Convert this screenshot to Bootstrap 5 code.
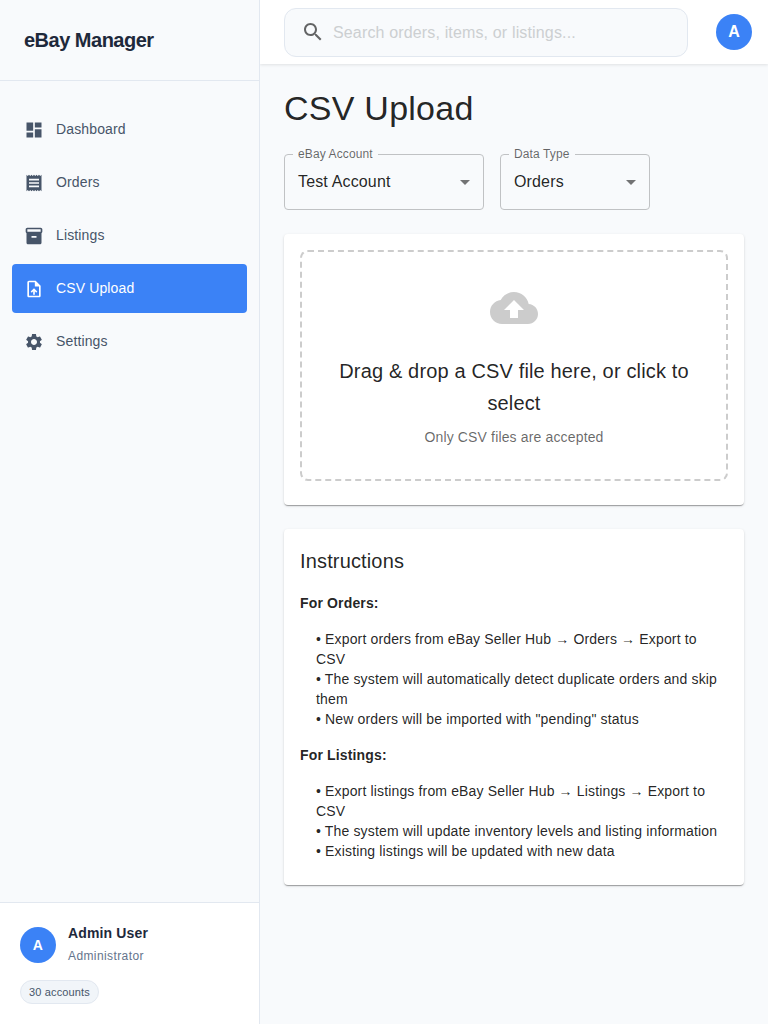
<!DOCTYPE html>
<html lang="en">
<head>
<meta charset="utf-8">
<meta name="viewport" content="width=device-width, initial-scale=1">
<title>eBay Manager</title>
<link href="https://cdn.jsdelivr.net/npm/bootstrap@5.3.0/dist/css/bootstrap.min.css" rel="stylesheet">
<style>
  body { font-family: "Liberation Sans", Arial, sans-serif; background: #f8fafc; color: rgba(0,0,0,.87); letter-spacing: .00938em; }
  .sidebar { width: 260px; border-right: 1px solid #e2e8f0; background: #f8fafc; z-index: 2; }
  .brand { height: 81px; border-bottom: 1px solid #e2e8f0; font-size: 20px; font-weight: 700; letter-spacing: -.025em; color: #1e293b; }
  .side-links { padding: 24px 12px; gap: 4px; }
  .side-links .nav-link { height: 49px; padding: 0 12px; gap: 12px; font-size: 14px; line-height: 21px; letter-spacing: .00938em; color: #475569; border-radius: 4px; }
  .side-links .nav-link span { padding-bottom: 1px; }
  .side-links .nav-link.active { background: #3b82f6; color: #fff; }
  svg { fill: currentColor; flex-shrink: 0; display: block; }
  .side-links svg { width: 20px; height: 20px; margin-top: 1px; }
  .user-panel { height: 122px; padding: 20px; background: #fff; border-top: 1px solid #e2e8f0; }
  .avatar { width: 36px; height: 36px; background: #3b82f6; color: #fff; font-weight: 600; letter-spacing: 0; }
  .user-name { font-size: 14px; line-height: 20px; letter-spacing: .01071em; color: #1e293b; font-weight: 600; }
  .user-role { font-size: 12px; line-height: 24px; letter-spacing: .03333em; color: #64748b; padding-top: 1px; height: 24px; }
  .account-chip { height: 24px; margin-top: 13px; padding: 0 8px; font-size: 11px; border: 1px solid #e2e8f0; background: #f1f5f9; color: #475569; letter-spacing: .15px; }
  .topbar { height: 64px; background: #fff; padding: 0 16px 0 24px; box-shadow: 0 1px 3px rgba(0,0,0,.1); }
  .search-box { width: 404px; height: 49px; margin-top: 1px; padding: 0 16px; gap: 8px; border: 1px solid #e2e8f0; border-radius: 12px; background: #f8fafc; }
  .search-box svg { color: rgba(0,0,0,.6); margin-top: -1px; }
  .search-box input { font: inherit; letter-spacing: inherit; background: none; outline: 0; padding: 0; }
  .search-box input::placeholder { color: #cccfd1; opacity: 1; }
  .page { padding: 23px 24px 24px; }
  .page-title { font-size: 34px; line-height: 42px; letter-spacing: .00735em; font-weight: 400; margin-bottom: 25px; }
  .select-box { height: 56px; padding: 0 6px 0 13px; border: 1px solid #c0c2c4; border-radius: 4px; }
  .select-box .float-label { left: 8px; top: -11px; padding: 0 5px; background: #f8fafc; font-size: 12px; line-height: 20px; letter-spacing: .00938em; color: rgba(0,0,0,.6); }
  .select-box svg { color: rgba(0,0,0,.54); }
  .panel { background: #fff; border-radius: 4px; padding: 16px 16px 24px; box-shadow: 0 2px 1px -1px rgba(0,0,0,.2), 0 1px 1px rgba(0,0,0,.14), 0 1px 3px rgba(0,0,0,.12); }
  .dropzone { border: 2px dashed #ccc; border-radius: 8px; padding: 32px; height: 231px; }
  .dropzone svg { color: #ccc; margin-bottom: 23px; }
  .title-6 { font-size: 20px; line-height: 32px; letter-spacing: .0075em; font-weight: 400; margin: 0; }
  .text-2 { font-size: 14px; line-height: 20px; letter-spacing: .01071em; margin: 0; }
  .hint { color: rgba(0,0,0,.6); }
  .select-wide { width: 200px; }
  .select-narrow { width: 150px; }
</style>
</head>
<body>
<div class="d-flex vh-100">
  <aside class="sidebar position-relative d-flex flex-column flex-shrink-0">
    <div class="brand d-flex align-items-center px-4">eBay Manager</div>
    <nav class="side-links nav flex-column flex-grow-1">
      <a class="nav-link d-flex align-items-center" href="#">
        <svg viewBox="0 0 24 24"><path d="M3 13h8V3H3v10zm0 8h8v-6H3v6zm10 0h8V11h-8v10zm0-18v6h8V3h-8z"/></svg><span>Dashboard</span></a>
      <a class="nav-link d-flex align-items-center" href="#">
        <svg viewBox="0 0 24 24"><path d="M19.5 3.500 18 2l-1.500 1.500L15 2l-1.500 1.500L12 2l-1.500 1.500L9 2 7.500 3.500 6 2 4.500 3.500 3 2v20l1.500-1.500L6 22l1.500-1.500L9 22l1.500-1.500L12 22l1.500-1.500L15 22l1.500-1.500L18 22l1.500-1.500L21 22V2l-1.500 1.500zM18 17H6v-2h12v2zm0-4H6v-2h12v2zm0-4H6V7h12v2z"/></svg><span>Orders</span></a>
      <a class="nav-link d-flex align-items-center" href="#">
        <svg viewBox="0 0 24 24"><path d="M20 2H4c-1 0-2 .9-2 2v3.010c0 .72.43 1.340 1 1.690V20c0 1.100 1.100 2 2 2h14c.9 0 2-.9 2-2V8.700c.57-.35 1-.97 1-1.690V4c0-1.100-1-2-2-2zm-5 12H9v-2h6v2zm5-7H4V4h16v3z"/></svg><span>Listings</span></a>
      <a class="nav-link active d-flex align-items-center" href="#">
        <svg viewBox="0 0 24 24"><path d="M14 2H6c-1.100 0-1.990.9-1.990 2L4 20c0 1.100.89 2 1.990 2H18c1.100 0 2-.9 2-2V8l-6-6zm4 18H6V4h7v5h5v11zM8 15.010l1.410 1.410L11 14.840V19h2v-4.160l1.590 1.590L16 15.010 12.010 11 8 15.010z"/></svg><span>CSV Upload</span></a>
      <a class="nav-link d-flex align-items-center" href="#">
        <svg viewBox="0 0 24 24"><path d="M19.140 12.940c.04-.3.060-.61.060-.94 0-.32-.02-.64-.07-.94l2.030-1.580c.18-.14.230-.41.120-.61l-1.920-3.320c-.12-.22-.37-.29-.59-.22l-2.390.96c-.5-.38-1.030-.7-1.620-.94l-.36-2.540c-.04-.24-.24-.41-.48-.41h-3.840c-.24 0-.43.17-.47.41l-.36 2.540c-.59.24-1.130.57-1.620.94l-2.390-.96c-.22-.08-.47 0-.59.22L2.740 8.870c-.12.21-.08.47.12.61l2.030 1.580c-.05.3-.09.630-.09.94s.02.640.07.940l-2.030 1.580c-.18.140-.23.410-.12.610l1.920 3.320c.12.220.370.290.590.220l2.390-.96c.5.380 1.030.700 1.620.940l.36 2.540c.05.240.240.410.480.410h3.840c.24 0 .440-.17.470-.41l.36-2.540c.59-.24 1.130-.56 1.620-.94l2.390.96c.22.080.470 0 .590-.22l1.920-3.320c.12-.22.070-.47-.12-.61l-2.010-1.580zM12 15.600c-1.980 0-3.600-1.620-3.600-3.600s1.620-3.600 3.600-3.600 3.600 1.620 3.600 3.600-1.620 3.600-3.600 3.600z"/></svg><span>Settings</span></a>
    </nav>
    <div class="user-panel">
      <div class="d-flex align-items-center">
        <div class="avatar rounded-circle d-flex align-items-center justify-content-center text-2 fw-bold">A</div>
        <div class="ms-2 ps-1">
          <div class="user-name">Admin User</div>
          <div class="user-role">Administrator</div>
        </div>
      </div>
      <span class="account-chip rounded-pill d-inline-flex align-items-center">30 accounts</span>
    </div>
  </aside>

  <div class="flex-grow-1 d-flex flex-column">
    <header class="topbar d-flex align-items-center justify-content-between">
      <label class="search-box d-flex align-items-center">
        <svg width="24" height="24" viewBox="0 0 24 24"><path d="M15.500 14h-.79l-.28-.27C15.410 12.590 16 11.110 16 9.500 16 5.910 13.090 3 9.500 3S3 5.910 3 9.500 5.910 16 9.500 16c1.610 0 3.090-.59 4.230-1.570l.27.280v.79l5 4.990L20.490 19l-4.990-5zm-6 0C7.010 14 5 11.990 5 9.500S7.010 5 9.500 5 14 7.010 14 9.500 11.990 14 9.500 14z"/></svg>
        <input class="border-0 flex-grow-1" type="text" placeholder="Search orders, items, or listings...">
      </label>
      <div class="avatar rounded-circle d-flex align-items-center justify-content-center">A</div>
    </header>

    <main class="page">
      <h1 class="page-title">CSV Upload</h1>
      <div class="d-flex gap-3 mb-4">
        <div class="select-box select-wide position-relative d-flex align-items-center justify-content-between">
          <span class="float-label position-absolute">eBay Account</span>
          <span>Test Account</span>
          <svg width="24" height="24" viewBox="0 0 24 24"><path d="M7 10l5 5 5-5z"/></svg>
        </div>
        <div class="select-box select-narrow position-relative d-flex align-items-center justify-content-between">
          <span class="float-label position-absolute">Data Type</span>
          <span>Orders</span>
          <svg width="24" height="24" viewBox="0 0 24 24"><path d="M7 10l5 5 5-5z"/></svg>
        </div>
      </div>

      <section class="panel mb-4">
        <div class="dropzone text-center">
          <svg class="mx-auto" width="48" height="48" viewBox="0 0 24 24"><path d="M19.350 10.040C18.670 6.590 15.640 4 12 4 9.110 4 6.600 5.640 5.350 8.040 2.340 8.360 0 10.910 0 14c0 3.310 2.690 6 6 6h13c2.760 0 5-2.240 5-5 0-2.640-2.050-4.780-4.650-4.960zM14 13v4h-4v-4H7l5-5 5 5h-3z"/></svg>
          <h2 class="title-6 mb-2">Drag &amp; drop a CSV file here, or click to select</h2>
          <p class="text-2 hint">Only CSV files are accepted</p>
        </div>
      </section>

      <section class="panel">
        <h2 class="title-6 mb-3">Instructions</h2>
        <p class="text-2 fw-bold mb-3">For Orders:</p>
        <div class="text-2 ps-3 mb-3">
          <div>• Export orders from eBay Seller Hub → Orders → Export to CSV</div>
          <div>• The system will automatically detect duplicate orders and skip them</div>
          <div>• New orders will be imported with "pending" status</div>
        </div>
        <p class="text-2 fw-bold mb-3">For Listings:</p>
        <div class="text-2 ps-3">
          <div>• Export listings from eBay Seller Hub → Listings → Export to CSV</div>
          <div>• The system will update inventory levels and listing information</div>
          <div>• Existing listings will be updated with new data</div>
        </div>
      </section>
    </main>
  </div>
</div>
<script src="https://cdn.jsdelivr.net/npm/bootstrap@5.3.0/dist/js/bootstrap.bundle.min.js"></script>
</body>
</html>
